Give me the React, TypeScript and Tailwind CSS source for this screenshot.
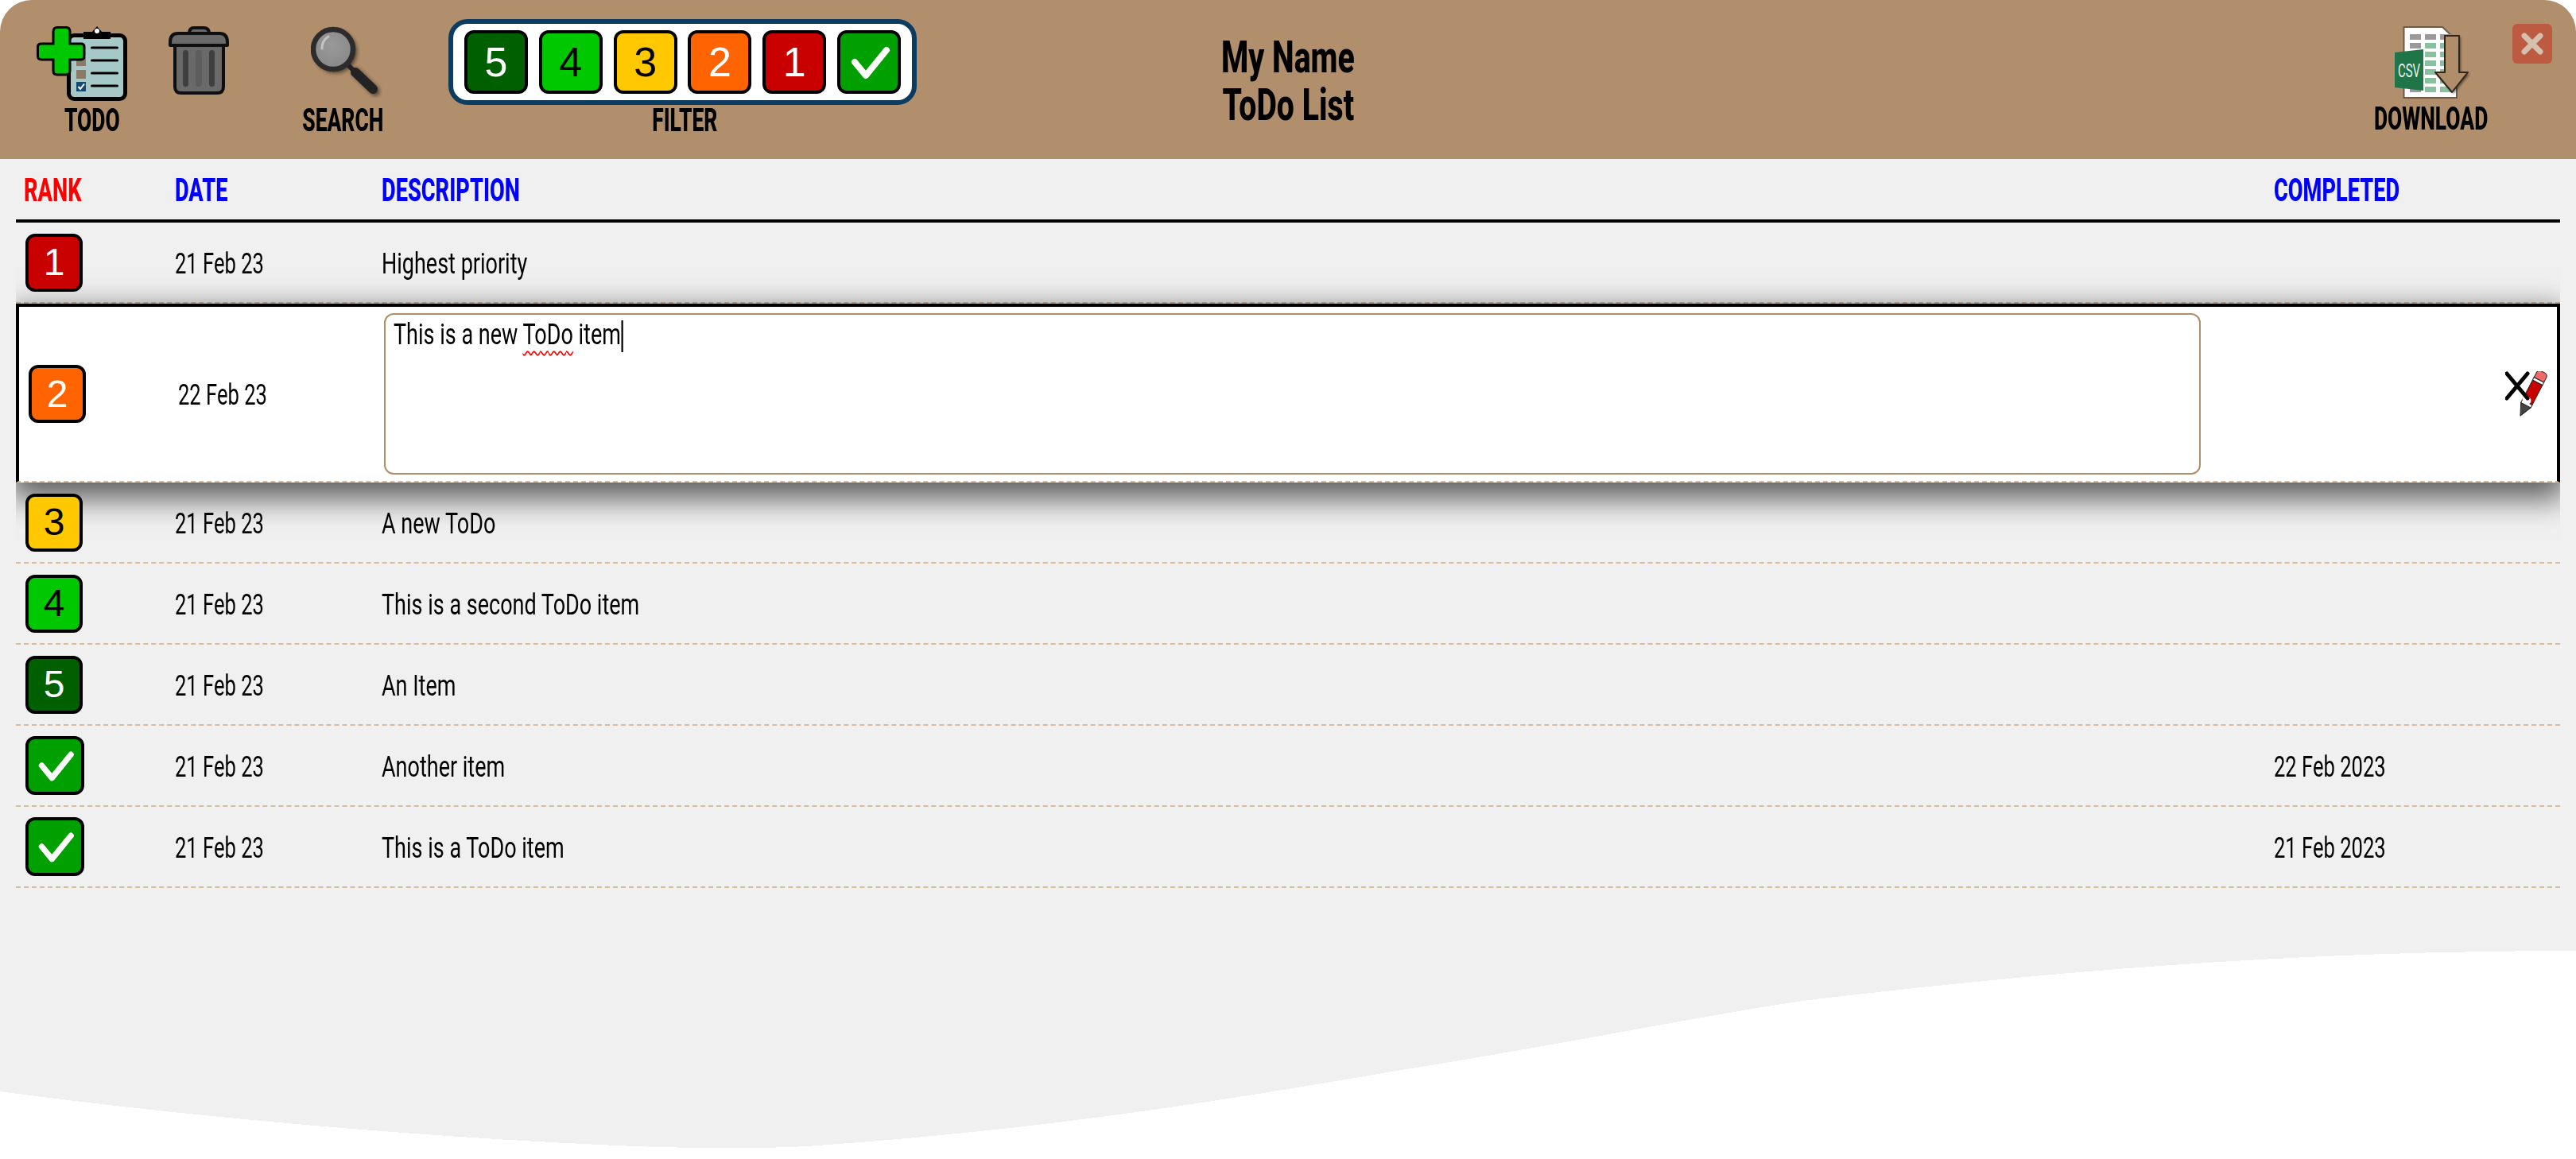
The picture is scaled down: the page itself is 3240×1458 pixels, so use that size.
import React from "react";

function Narrow({ children, date }: { children: React.ReactNode; date?: boolean }) {
  return <span className={`inline-block whitespace-nowrap origin-left pt-[3px] ${date ? "scale-x-[0.71]" : "scale-x-[0.75]"}`}>{children}</span>;
}

function Head({ children }: { children: React.ReactNode }) {
  return <span className="inline-block origin-left scale-x-[0.68] whitespace-nowrap pt-[3px]">{children}</span>;
}

function Label({ children }: { children: React.ReactNode }) {
  return (
    <div className="flex h-[40px] items-center justify-center">
      <span className="inline-block origin-center scale-x-[0.66] whitespace-nowrap text-[40px] leading-none font-extrabold text-black">{children}</span>
    </div>
  );
}

function CheckMark() {
  return (
    <svg viewBox="0 0 72 72" className="h-full w-full">
      <path d="M18 36 L32 53 L58 21" fill="none" stroke="#fff" strokeWidth="8" strokeLinecap="round" strokeLinejoin="round" />
    </svg>
  );
}

function Rank({ r, small }: { r: string; small?: boolean }) {
  const colors: Record<string, string> = {
    "5": "bg-[#006000] text-white",
    "4": "bg-[#00c800] text-black",
    "3": "bg-[#ffc800] text-black",
    "2": "bg-[#ff6400] text-white",
    "1": "bg-[#c80000] text-white",
    c: "bg-[#00a000] text-white",
  };
  const size = small
    ? r === "c"
      ? "h-[74px] w-[74px] text-[48px]"
      : "h-[73px] w-[72px] text-[48px]"
    : "h-[80px] w-[80px] text-[52px]";
  return (
    <div className={`flex shrink-0 items-center justify-center rounded-[12px] border-[4px] border-black font-['Liberation_Sans',sans-serif] leading-none ${size} ${colors[r]}`}>
      {r === "c" ? <CheckMark /> : r}
    </div>
  );
}

function TodoIcon() {
  return (
    <svg width="114" height="94" viewBox="0 0 114 94">
      <rect x="40.5" y="11.5" width="71" height="80" rx="7" fill="#a6c9c8" stroke="#000" strokeWidth="5" />
      <path d="M59 7 H70 L76 0 L82 7 H93 V16 H59 Z" fill="#000" strokeLinejoin="round" />
      <circle cx="76" cy="6" r="3" fill="#fff" />
      {[27, 43, 59, 75].map((y) => (
        <rect key={y} x="68" y={y - 1.5} width="35" height="3" rx="1.5" fill="#000" />
      ))}
      <rect x="50" y="39" width="12" height="11" fill="#8c7a68" />
      <rect x="50" y="55" width="12" height="11" fill="#8c7a68" />
      <rect x="50" y="70" width="12" height="12" fill="#134a75" />
      <path d="M52.5 76 L55 79 L60 72.5" fill="none" stroke="#fff" strokeWidth="2" />
      <path d="M21 7 Q21 1.5 26 1.5 H37 Q42 1.5 42 7 V22 H56 Q60 22 60 26 V37 Q60 42 56 42 H42 V56 Q42 61 37 61 H26 Q21 61 21 56 V42 H6 Q1.5 42 1.5 37 V26 Q1.5 22 6 22 H21 Z" fill="#00c800" stroke="#000" strokeWidth="3" />
    </svg>
  );
}

function TrashIcon() {
  return (
    <svg width="76" height="86" viewBox="0 0 76 86">
      <path d="M26 9 Q26 2 32 2 H44 Q51 2 51 9 V12 H26 Z" fill="#6a6a6a" stroke="#0f0f0f" strokeWidth="4" />
      <path d="M8 24 H69 V76 Q69 84 61 84 H16 Q8 84 8 76 Z" fill="#6a6a6a" stroke="#0f0f0f" strokeWidth="4" />
      <path d="M2 20 Q2 9 12 9 H64 Q74 9 74 20 V24 H2 Z" fill="#6a6a6a" stroke="#0f0f0f" strokeWidth="4" strokeLinejoin="round" />
      <rect x="18" y="30" width="7" height="46" rx="3.5" fill="#3f3f3f" />
      <rect x="34" y="30" width="8" height="46" rx="4" fill="#5d5d5d" />
      <rect x="51" y="30" width="7" height="46" rx="3.5" fill="#3f3f3f" />
    </svg>
  );
}

function SearchIcon() {
  return (
    <svg width="90" height="90" viewBox="0 0 90 90">
      <defs>
        <radialGradient id="lens" cx="0.45" cy="0.4" r="0.7">
          <stop offset="0" stopColor="#999" />
          <stop offset="1" stopColor="#868686" />
        </radialGradient>
        <filter id="soft" x="-30%" y="-30%" width="170%" height="170%">
          <feGaussianBlur stdDeviation="2.5" />
        </filter>
      </defs>
      <g filter="url(#soft)" opacity="0.55" transform="translate(3 3)">
        <circle cx="28" cy="29" r="27" fill="#000" />
        <path d="M54 55 L78 79" stroke="#000" strokeWidth="11" strokeLinecap="round" />
      </g>
      <path d="M44 46 L54 56" stroke="#222" strokeWidth="6" />
      <path d="M56 58 L78 79" stroke="#232323" strokeWidth="12" strokeLinecap="round" />
      <circle cx="28" cy="29" r="25" fill="url(#lens)" stroke="#2c2c2c" strokeWidth="6.5" />
      <path d="M14 28 Q14 18 22 13" fill="none" stroke="#c4c4c4" strokeWidth="3" strokeLinecap="round" />
    </svg>
  );
}

function CsvIcon() {
  const rows = [10, 21, 32, 43, 54, 65, 76];
  return (
    <svg width="96" height="92" viewBox="0 0 96 92">
      <defs>
        <filter id="arrowshadow" x="-30%" y="-30%" width="170%" height="170%">
          <feGaussianBlur stdDeviation="1.5" />
        </filter>
      </defs>
      <path d="M11.5 1 H60 L78 18 V90 H11.5 Z" fill="#fff" stroke="#6b5b4d" strokeWidth="2" />
      {rows.map((y, i) => (
        <g key={y}>
          <rect x="19" y={y} width="14" height="7" fill={i < 2 || i === 6 ? "#9a9a9a" : "#88c0a0"} />
          <rect x="38" y={y} width="14" height="7" fill={i === 0 ? "#9a9a9a" : "#88c0a0"} />
          <rect x="57" y={y} width="14" height="7" fill={i === 0 ? "#9a9a9a" : "#88c0a0"} />
        </g>
      ))}
      <polygon points="0,33 36,29 36,81 0,77" fill="#1f7548" />
      <text x="18" y="64" textAnchor="middle" fill="#e8f3ec" fontSize="24" fontFamily="Roboto, sans-serif" textLength="28" lengthAdjust="spacingAndGlyphs">CSV</text>
      <path d="M63 12 H81 V58 H92 L72 83 L51 58 H63 Z" fill="#000" opacity="0.5" filter="url(#arrowshadow)" transform="translate(2 2)" />
      <path d="M63 12 H81 V58 H92 L72 83 L51 58 H63 Z" fill="#b08d6b" stroke="#2f261d" strokeWidth="2" strokeLinejoin="round" />
    </svg>
  );
}

function EditIcons() {
  return (
    <svg width="56" height="58" viewBox="0 0 56 58">
      <g transform="translate(19 56) rotate(27.4)" stroke="#222" strokeWidth="1">
        <path d="M0 0 L-7 -15 H7 Z" fill="#444" strokeLinejoin="round" />
        <rect x="-7" y="-19" width="14" height="4" fill="#fff" />
        <rect x="-7" y="-47" width="14" height="28" fill="#c80000" />
        <rect x="-7" y="-51" width="14" height="4" fill="#fff" />
        <path d="M-7 -51 V-57 Q-7 -62 -2 -62 H2 Q7 -62 7 -57 V-51 Z" fill="#f06a6a" />
      </g>
      <path d="M26 35 L28 37" stroke="#fff" strokeWidth="9" strokeLinecap="round" />
      <path d="M2 3 L28 34 M28 3 L2 34" stroke="#000" strokeWidth="5" strokeLinecap="round" />
    </svg>
  );
}

const rows = [
  { r: "3", date: "21 Feb 23", text: "A new ToDo", done: "" },
  { r: "4", date: "21 Feb 23", text: "This is a second ToDo item", done: "" },
  { r: "5", date: "21 Feb 23", text: "An Item", done: "" },
  { r: "c", date: "21 Feb 23", text: "Another item", done: "22 Feb 2023" },
  { r: "c", date: "21 Feb 23", text: "This is a ToDo item", done: "21 Feb 2023" },
];

function Row({ r, date, text, done }: { r: string; date: string; text: string; done: string }) {
  return (
    <div className="grid h-[102px] grid-cols-[200px_261px_1fr_360px] items-center border-b-2 border-dashed border-[#d8bc9c] text-[36px] text-black">
      <div className="pl-[12px]"><Rank r={r} small /></div>
      <div><Narrow date>{date}</Narrow></div>
      <div className="-ml-px"><Narrow>{text}</Narrow></div>
      <div><Narrow date>{done}</Narrow></div>
    </div>
  );
}

export default function App() {
  return (
    <div className="relative h-[1458px] w-[3240px] overflow-hidden bg-white font-['Roboto','Liberation_Sans',sans-serif]">
      <header className="relative flex h-[200px] items-start rounded-t-[40px] bg-[#b18e6c] pt-[24px]">
        <div className="ml-[46px] flex w-[140px] flex-col">
          <div className="mt-[9px] h-[94px]"><TodoIcon /></div>
          <div className="mt-[5px]"><Label>TODO</Label></div>
        </div>
        <div className="ml-[26px] mt-[9px] h-[86px] w-[76px]"><TrashIcon /></div>
        <div className="ml-[88px] flex w-[110px] flex-col">
          <div className="mt-[9px] h-[94px] pl-[15px]"><SearchIcon /></div>
          <div className="mt-[5px]"><Label>SEARCH</Label></div>
        </div>
        <div className="ml-[78px] flex w-[589px] flex-col">
          <div className="flex h-[108px] items-center justify-between rounded-[24px] border-[6px] border-[#0d3c61] bg-white px-[14px]">
            {["5", "4", "3", "2", "1", "c"].map((r) => (
              <Rank key={r} r={r} />
            ))}
          </div>
          <div className="pl-[5px]"><Label>FILTER</Label></div>
        </div>
        <div className="ml-[317px] flex w-[300px] flex-col items-center pt-[18px] text-[56px] leading-[60px] font-extrabold text-black">
          <span className="inline-block origin-center scale-x-[0.7] whitespace-nowrap">My Name</span>
          <span className="inline-block origin-center scale-x-[0.7] whitespace-nowrap">ToDo List</span>
        </div>
        <div className="ml-auto mr-[122px] flex w-[120px] flex-col items-center">
          <div className="mt-[9px] h-[92px] w-[96px] pl-[2px]"><CsvIcon /></div>
          <div className="mt-[5px]"><Label>DOWNLOAD</Label></div>
        </div>
        <div className="absolute right-[30px] top-[30px] flex h-[50px] w-[50px] items-center justify-center rounded-[6px] bg-[#bd5a42]">
          <svg width="28" height="28" viewBox="0 0 28 28">
            <path d="M4 4 L24 24 M24 4 L4 24" stroke="#d4c0ac" strokeWidth="7" strokeLinecap="round" />
          </svg>
        </div>
      </header>

      <main className="h-[1258px] bg-[#f0f0f0]">
        <div className="mx-[20px] overflow-x-clip">
          <div className="grid h-[80px] grid-cols-[200px_261px_1fr_360px] items-center border-b-4 border-black text-[40px] font-extrabold text-[#0000ff]">
            <div className="pl-[10px] text-[#ff0000]"><Head>RANK</Head></div>
            <div><Head>DATE</Head></div>
            <div className="-ml-px"><Head>DESCRIPTION</Head></div>
            <div><Head>COMPLETED</Head></div>
          </div>

          <div className="grid h-[102px] grid-cols-[200px_261px_1fr_360px] items-center border-b-2 border-dashed border-[#d8bc9c] text-[36px] text-black">
            <div className="pl-[12px]"><Rank r="1" small /></div>
            <div><Narrow date>21 Feb 23</Narrow></div>
            <div className="-ml-px"><Narrow>Highest priority</Narrow></div>
            <div />
          </div>

          <div className="grid h-[225px] grid-cols-[200px_261px_1fr_360px] items-center border-x-4 border-t-4 border-b-2 border-black border-b-[#d8bc9c] [border-bottom-style:dashed] bg-white text-[36px] text-black shadow-[0_14px_36px_6px_rgba(0,0,0,0.62)]">
            <div className="pl-[12px]"><Rank r="2" small /></div>
            <div><Narrow date>22 Feb 23</Narrow></div>
            <div className="-ml-[2px] h-[203px] w-[2285px] rounded-[12px] border-2 border-[#b08d6b] bg-white pl-[10px] leading-[44px]">
              <Narrow>
                This is a new <span className="underline decoration-[#ff0000] decoration-wavy decoration-2 underline-offset-[8px]">ToDo</span> item
                <span className="ml-px inline-block h-[40px] w-[3px] bg-black align-middle" />
              </Narrow>
            </div>
            <div className="flex justify-end pr-[9px]"><EditIcons /></div>
          </div>

          {rows.map((row, i) => (
            <Row key={i} {...row} />
          ))}
        </div>
      </main>

      <svg className="absolute left-0 top-[1150px]" width="3240" height="308" viewBox="0 0 3240 308" shapeRendering="crispEdges">
        <path d="M0 223 C 200 250 500 280 800 292 C 880 295 960 295 1015 292 C 1300 272 1500 241 1757 197 C 2000 158 2200 116 2300 105 C 2600 70 2900 46 3240 46 V308 H0 Z" fill="#fff" />
      </svg>
    </div>
  );
}
